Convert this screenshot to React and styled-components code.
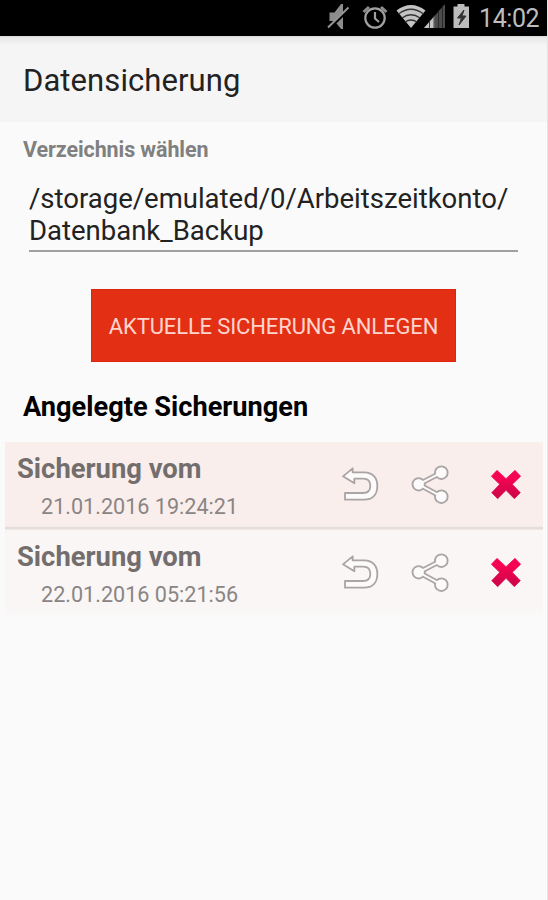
import styled, { createGlobalStyle } from 'styled-components'

const GlobalStyle = createGlobalStyle`
  * { box-sizing: border-box; }
  body {
    margin: 0;
    background-color: #fafafa;
    font-family: Roboto, "Liberation Sans", sans-serif;
  }
`

const Screen = styled.div`
  width: 548px;
  height: 900px;
  overflow: hidden;
  background-color: #fafafa;
  border-right: 1px solid #e4e4e4;
`

const StatusBar = styled.div`
  display: flex;
  align-items: center;
  width: 548px;
  height: 36px;
  padding-left: 324px;
  background-color: #000;
`

const StatusIcons = styled.svg`
  width: 150px;
  height: 36px;
  flex: none;
`

const Clock = styled.span`
  margin-left: 5px;
  font-size: 25px;
  letter-spacing: -0.4px;
  color: #bdbdbd;
`

const Header = styled.header`
  height: 86px;
  padding: 27px 24px 0 23px;
  background: linear-gradient(#d9d9d9 0, #ebebeb 2px, #ededed 5px, #f5f5f5 9px);
`

const Title = styled.h1`
  margin: 0;
  font-size: 31px;
  line-height: 36px;
  font-weight: 400;
  letter-spacing: 0.08px;
  color: #222;
`

const Label = styled.div`
  height: 54px;
  padding: 15px 0 0 23px;
  font-size: 21.5px;
  line-height: 26px;
  font-weight: 700;
  letter-spacing: -0.1px;
  color: #808080;
`

const PathField = styled.div`
  height: 76px;
  margin: 0 29px 0 29px;
  padding-top: 7px;
  border-bottom: 2px solid #a0a0a0;
  font-size: 27.5px;
  line-height: 32px;
  color: #222;
  white-space: nowrap;
`

const BackupButton = styled.button`
  display: block;
  width: 365px;
  height: 73px;
  margin: 37px 0 0 91px;
  padding: 2px 0 0;
  border: 1px solid #df2410;
  background-color: #e33015;
  font-family: inherit;
  font-size: 22px;
  letter-spacing: -0.13px;
  color: #ffd5cd;
  white-space: nowrap;
`

const SectionTitle = styled.h2`
  height: 80px;
  margin: 0;
  padding: 29px 0 0 23px;
  font-size: 27.2px;
  line-height: 32px;
  font-weight: 700;
  color: #000;
`

const List = styled.div`
  margin: 0 4px 0 5px;
`

const Row = styled.div`
  display: flex;
  height: 88px;
  padding-left: 12px;
  background: ${props => (props.$active ? 'linear-gradient(#f9eeeb 84px, #dfd8d5 86px, #f3eeec 88px)' : 'linear-gradient(#f9f6f5 86%, #fafafa)')};
`

const Info = styled.div`
  width: 323px;
  padding-top: 11px;
`

const Name = styled.div`
  font-size: 27.4px;
  line-height: 32px;
  font-weight: 700;
  color: #736e6d;
`

const Stamp = styled.div`
  padding: 8px 0 0 24px;
  font-size: 21.6px;
  line-height: 28px;
  color: #8a8584;
`

const Actions = styled.div`
  display: flex;
  gap: 30px;
  padding-top: 22px;
`

const Icon = styled.svg`
  width: 40px;
  height: 40px;
  flex: none;
  margin-left: ${props => props.$shift || 0}px;
`

const backups = [
  { stamp: '21.01.2016 19:24:21', active: true },
  { stamp: '22.01.2016 05:21:56', active: false },
]

const StatusSymbols = () => (
  <StatusIcons viewBox="324 0 150 36">
    {/* muted ringer */}
    <path d="M329.500 12.500h5l6.500-8.500h2v25h-2l-6.500-8h-5z" fill="#8c8c8c" />
    <path d="M328.500 28.500L349.500 8.500" stroke="#000" strokeWidth="3.600" />
    <path d="M328 27.500L348.500 7.500" stroke="#969696" strokeWidth="1.900" />
    {/* alarm */}
    <circle cx="375" cy="18" r="9.700" fill="none" stroke="#a0a0a0" strokeWidth="2.200" />
    <path d="M375 12v6.500l4 3.500" fill="none" stroke="#a0a0a0" strokeWidth="2.200" />
    <path d="M363.500 12l5.500-5M386.500 12l-5.500-5" stroke="#8c8c8c" strokeWidth="3" />
    {/* wifi */}
    <path d="M396.500 10.500Q411 -0.500 425.500 10.500L411 28z" fill="#c4c4c4" />
    <path d="M398.500 14Q411 4.500 423.500 14M402 18Q411 11.500 420 18M405 22Q411 18 417 22" fill="none" stroke="#333" strokeWidth="1.300" />
    {/* signal */}
    <path d="M445 4v24h-21z" fill="#4c4c4c" />
    <path d="M434.500 16v12H424z" fill="#c4c4c4" />
    <path d="M429.500 20v8M434 15v13M438.500 10v18M442.500 6v22" stroke="#222" strokeWidth="0.800" />
    {/* charging battery */}
    <path d="M457.500 4h7v2.500h4.500V28h-15.500V6.500h4z" fill="#bcbcbc" />
    <path d="M464 10l-6.500 8h4l-2.500 7 7-9h-4z" fill="#333" stroke="#333" />
  </StatusIcons>
)

const UndoIcon = () => (
  <Icon viewBox="60 105 120 120">
    <path
      d="M69 142L98 118L98 130H133C158 130 172 147 172 171C172 197 157 212 132 212H75V192H129C144 192 151 184 151 171C151 158 144 149 130 149H103V163Z"
      fill="#fcfafa"
      stroke="#aaa5a4"
      strokeWidth="5.500"
      strokeLinejoin="round"
    />
  </Icon>
)

const ShareIcon = () => (
  <Icon viewBox="270 101 120 120">
    <path d="M364 127L296 162L364 199" fill="none" stroke="#aaa5a4" strokeWidth="16" />
    <g fill="#fcfafa" stroke="#aaa5a4" strokeWidth="5.500">
      <circle cx="364" cy="127" r="19" />
      <circle cx="296" cy="162" r="18.500" />
      <circle cx="364" cy="199" r="19" />
    </g>
    <path d="M364 127L296 162L364 199" fill="none" stroke="#fcfafa" strokeWidth="6" />
  </Icon>
)

const DeleteIcon = () => (
  <Icon viewBox="498 102 120 120" $shift={6}>
    <defs>
      <linearGradient id="pink" x1="0" y1="0" x2="0" y2="1">
        <stop offset="0.300" stopColor="#f40452" />
        <stop offset="0.850" stopColor="#d2054a" />
      </linearGradient>
    </defs>
    <path
      d="M531 121L558 146L585 121L602 139L577 163L601 188L583 206L558 181L533 206L515 188L539 163L514 139Z"
      fill="url(#pink)"
      stroke="url(#pink)"
      strokeWidth="2"
      strokeLinejoin="round"
    />
  </Icon>
)

const App = () => {
  return (
    <>
      <GlobalStyle />
      <Screen>
        <StatusBar>
          <StatusSymbols />
          <Clock>14:02</Clock>
        </StatusBar>
        <Header>
          <Title>Datensicherung</Title>
        </Header>
        <Label>Verzeichnis wählen</Label>
        <PathField>
          /storage/emulated/0/Arbeitszeitkonto/
          <br />
          Datenbank_Backup
        </PathField>
        <BackupButton>AKTUELLE SICHERUNG ANLEGEN</BackupButton>
        <SectionTitle>Angelegte Sicherungen</SectionTitle>
        <List>
          {backups.map(backup => (
            <Row key={backup.stamp} $active={backup.active}>
              <Info>
                <Name>Sicherung vom</Name>
                <Stamp>{backup.stamp}</Stamp>
              </Info>
              <Actions>
                <UndoIcon />
                <ShareIcon />
                <DeleteIcon />
              </Actions>
            </Row>
          ))}
        </List>
      </Screen>
    </>
  )
}

export default App
